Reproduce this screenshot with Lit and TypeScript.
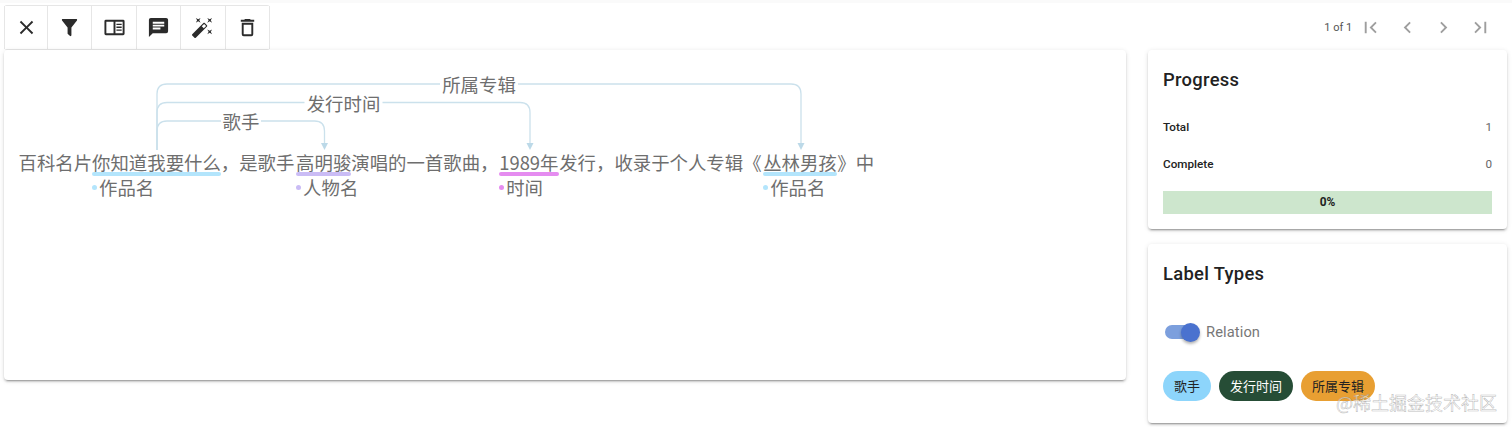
import { LitElement, html, css, svg } from "lit";
import { customElement } from "lit/decorators.js";

const ICONS: Record<string, string> = {
  close: "M19 6.41L17.59 5 12 10.59 6.41 5 5 6.41 10.59 12 5 17.59 6.41 19 12 13.41 17.59 19 19 17.59 13.41 12z",
  filter: "M14,12V19.88C14.04,20.18 13.94,20.5 13.71,20.71C13.32,21.1 12.69,21.1 12.3,20.71L10.29,18.7C10.06,18.47 9.96,18.16 10,17.87V12H9.97L4.21,4.62C3.87,4.19 3.95,3.56 4.38,3.22C4.57,3.08 4.78,3 5,3H19C19.22,3 19.43,3.08 19.62,3.22C20.05,3.56 20.13,4.19 19.79,4.62L14.03,12H14Z",
  book: "M3,4H21A1.5,1.5 0 0,1 22.5,5.5V18.5A1.5,1.5 0 0,1 21,20H3A1.5,1.5 0 0,1 1.5,18.5V5.5A1.5,1.5 0 0,1 3,4M3.5,6V18H11V6H3.5M13,6V18H20.5V6H13M14,8H19.5V9.5H14V8M14,11H19.5V12.5H14V11M14,14H19.5V15.5H14V14Z",
  comment: "M20,2H4A2,2 0 0,0 2,4V22L6,18H20A2,2 0 0,0 22,16V4C22,2.89 21.1,2 20,2M6,9H18V11H6M14,14H6V12H14M18,8H6V6H18",
  wand: "M7.5,5.6L5,7L6.4,4.5L5,2L7.5,3.4L10,2L8.6,4.5L10,7L7.5,5.6M19.5,15.4L22,14L20.6,16.5L22,19L19.5,17.6L17,19L18.4,16.5L17,14L19.5,15.4M22,2L20.6,4.5L22,7L19.5,5.6L17,7L18.4,4.5L17,2L19.5,3.4L22,2M13.34,12.78L15.78,10.34L13.66,8.22L11.22,10.66L13.34,12.78M14.37,7.29L16.71,9.63C17.1,10 17.1,10.65 16.71,11.04L5.04,22.71C4.65,23.1 4,23.1 3.63,22.71L1.29,20.37C0.9,20 0.9,19.35 1.29,18.96L12.96,7.29C13.35,6.9 14,6.9 14.37,7.29Z",
  del: "M6,19A2,2 0 0,0 8,21H16A2,2 0 0,0 18,19V7H6V19M8,9H16V19H8V9M15.5,4L14.5,3H9.5L8.5,4H5V6H19V4H15.5Z",
  first: "M18.41,16.59L13.82,12L18.41,7.41L17,6L11,12L17,18L18.41,16.59M6,6H8V18H6V6Z",
  prev: "M15.41,16.58L10.83,12L15.41,7.41L14,6L8,12L14,18L15.41,16.58Z",
  next: "M8.59,16.58L13.17,12L8.59,7.41L10,6L16,12L10,18L8.59,16.58Z",
  last: "M5.59,7.41L10.18,12L5.59,16.59L7,18L13,12L7,6L5.59,7.41M16,6H18V18H16V6Z",
};

const icon = (n: string) => html`<svg class="ic" viewBox="0 0 24 24"><path d=${ICONS[n]}></path></svg>`;

type Chunk = { t: string; label?: string; color?: string; gap?: number; w?: number };
const CHUNKS: Chunk[] = [
  { t: "百科名片" },
  { t: "你知道我要什么", label: "作品名", color: "#b3e5fc" },
  { t: "，是歌手" },
  { t: "高明骏", label: "人物名", color: "#cabcf5", gap: 1.7 },
  { t: "演唱的一首歌曲，" },
  { t: "1989年", label: "时间", color: "#e58cf0", gap: 0.8, w: 60 },
  { t: "发行，收录于个人专辑《" },
  { t: "丛林男孩", label: "作品名", color: "#b3e5fc", gap: 1.6 },
  { t: "》中", gap: 0.6 },
];

// x-coordinates are relative to the main card (card starts at x=4, y=50)
const ARCS = [
  { to: 320.5, y: 71, label: "歌手", lx: 237, lw: 40 },
  { to: 526, y: 52.5, label: "发行时间", lx: 339.5, lw: 78 },
  { to: 797, y: 34, label: "所属专辑", lx: 475, lw: 78 },
];
const FROM = 153;
const BOTTOM = 100;

@customElement("app-root")
export class AppRoot extends LitElement {
  static styles = css`
    :host {
      display: block;
      height: 427px;
      overflow: hidden;
      background: #fff;
      font-family: Roboto, "Noto Sans CJK SC", sans-serif;
      position: relative;
    }
    .band { height: 3px; background: #fafafa; }
    .page { display: flex; gap: 22px; padding: 0 5px 0 4px; height: 424px; }
    .left { width: 1122px; display: flex; flex-direction: column; }
    .right { width: 359px; display: flex; flex-direction: column; }
    .toolbar {
      margin-top: 2px; height: 45px; width: 266px; display: flex; box-sizing: border-box;
      border-top: 1px solid #e6e6e6; border-bottom: 1px solid #e6e6e6; border-radius: 3px;
    }
    .toolbar button {
      width: 44.4px; flex: none; box-sizing: border-box; padding: 0; border: none; background: #fff; display: flex;
      align-items: center; justify-content: center; border-right: 1px solid #e6e6e6;
    }
    .toolbar button:first-child { width: 44px; border-left: 1px solid #e6e6e6; }
    .ic { width: 23px; height: 23px; fill: #2b2b2b; display: block; }
    .card {
      background: #fff; border-radius: 4px;
      box-shadow: 0 3px 1px -2px rgba(0,0,0,.2), 0 2px 2px 0 rgba(0,0,0,.14), 0 1px 5px 0 rgba(0,0,0,.12);
    }
    .main { height: 330px; position: relative; }
    .arcs { position: absolute; left: 0; top: 0; width: 1122px; height: 130px; }
    .arcs path.line { fill: none; stroke: #cbe1ec; stroke-width: 1.3; }
    .arcs path.head { fill: #bcd9e8; }
    .arcs rect { fill: #fff; }
    .arcs text { font: 18.4px "Noto Sans CJK SC", sans-serif; fill: #6e6e6e; text-anchor: middle; dominant-baseline: central; }
    .flow {
      display: flex; padding: 102px 0 0 14.5px;
      font: 18.4px/21px "Noto Sans CJK SC", sans-serif; color: #6e6e6e;
    }
    .chunk { display: flex; flex-direction: column; white-space: nowrap; }
    .ul { height: 4px; border-radius: 2px; margin-top: -1px; }
    .tag { display: flex; align-items: center; gap: 2px; line-height: 21px; margin-top: 1px; width: 0; }
    .dot { width: 5px; height: 5px; border-radius: 50%; flex: none; }
    .pager {
      height: 46px; padding-top: 1px; display: flex; align-items: center; justify-content: flex-end;
      gap: 13.7px; padding-right: 15px; font-size: 11px; color: #555;
    }
    .pager .ic { fill: #9e9e9e; }
    .pager .count { margin-right: -7px; }
    .side { height: 179px; box-sizing: border-box; padding: 0 15px; }
    .side + .side { margin-top: 15px; }
    h2 {
      margin: 0; font-size: 18.4px; font-weight: 500; letter-spacing: .3px;
      color: #222; line-height: 24px; padding-top: 18px;
    }
    .stat {
      display: flex; justify-content: space-between; font-size: 11.7px; height: 37px;
      align-items: center; color: #666;
    }
    .stat b { font-weight: 500; color: #222; }
    .stats { margin-top: 16px; }
    .bar {
      margin-top: 9px; height: 23px; background: #cde6cd; text-align: center;
      font-size: 11.9px; font-weight: 700; line-height: 23px; color: #222;
    }
    .switch { display: flex; align-items: center; margin-top: 31px; height: 30px; color: #777; font-size: 14.7px; letter-spacing: .1px; }
    .track { width: 30px; height: 14px; border-radius: 7px; background: #7c9fdd; margin-left: 2px; position: relative; }
    .knob {
      position: absolute; right: -5px; top: -2.5px; width: 19px; height: 19px; border-radius: 50%;
      background: #4a72cf; box-shadow: 0 2px 3px rgba(0,0,0,.3);
    }
    .switch span { margin-left: 11px; }
    .chips { display: flex; gap: 8px; margin-top: 24px; }
    .chip {
      height: 29.5px; border-radius: 15px; padding: 0 11px; display: flex; align-items: center;
      font: 13px "Noto Sans CJK SC", sans-serif;
    }
    .c1 { background: #8dd5fb; color: #222; }
    .c2 { background: #264d36; color: #fff; }
    .c3 { background: #e89f32; color: #222; }
    .wm {
      position: absolute; left: 1336px; top: 390px; font: 18px/24px "Noto Sans CJK SC", sans-serif;
      color: rgba(255,255,255,.6); -webkit-text-stroke: .5px rgba(120,120,120,.55); white-space: nowrap;
    }
  `;

  private arc(a: { to: number; y: number; label: string; lx: number; lw: number }) {
    const r = 10;
    const d = `M${FROM} ${BOTTOM}V${a.y + r}Q${FROM} ${a.y} ${FROM + r} ${a.y}H${a.to - r}Q${a.to} ${a.y} ${a.to} ${a.y + r}V${BOTTOM - 6}`;
    return svg`
      <path class="line" d=${d}></path>
      <path class="head" d="M${a.to - 3.5} ${BOTTOM - 7}H${a.to + 3.5}L${a.to} ${BOTTOM}Z"></path>
      <rect x=${a.lx - a.lw / 2} y=${a.y - 9} width=${a.lw} height="18"></rect>
      <text x=${a.lx} y=${a.y}>${a.label}</text>`;
  }

  render() {
    return html`
      <div class="band"></div>
      <div class="page">
        <div class="left">
          <div class="toolbar">
            ${["close", "filter", "book", "comment", "wand", "del"].map((n) => html`<button>${icon(n)}</button>`)}
          </div>
          <div class="card main">
            <svg class="arcs" viewBox="0 0 1122 130">${ARCS.map((a) => this.arc(a))}</svg>
            <div class="flow">
              ${CHUNKS.map(
                (c) => html`<div class="chunk" style="${c.gap ? `margin-left:${c.gap}px;` : ""}${c.w ? `width:${c.w}px;` : ""}">
                  <div>${c.t}</div>
                  ${c.label
                    ? html`<div class="ul" style="background:${c.color}"></div>
                        <div class="tag"><i class="dot" style="background:${c.color}"></i>${c.label}</div>`
                    : ""}
                </div>`
              )}
            </div>
          </div>
        </div>
        <div class="right">
          <div class="pager">
            <span class="count">1 of 1</span>
            ${["first", "prev", "next", "last"].map((n) => icon(n))}
          </div>
          <div class="card side">
            <h2>Progress</h2>
            <div class="stats">
              <div class="stat"><b>Total</b><span>1</span></div>
              <div class="stat"><b>Complete</b><span>0</span></div>
            </div>
            <div class="bar">0%</div>
          </div>
          <div class="card side">
            <h2>Label Types</h2>
            <div class="switch"><div class="track"><div class="knob"></div></div><span>Relation</span></div>
            <div class="chips">
              <div class="chip c1">歌手</div>
              <div class="chip c2">发行时间</div>
              <div class="chip c3">所属专辑</div>
            </div>
          </div>
        </div>
      </div>
      <div class="wm">@稀土掘金技术社区</div>
    `;
  }
}
